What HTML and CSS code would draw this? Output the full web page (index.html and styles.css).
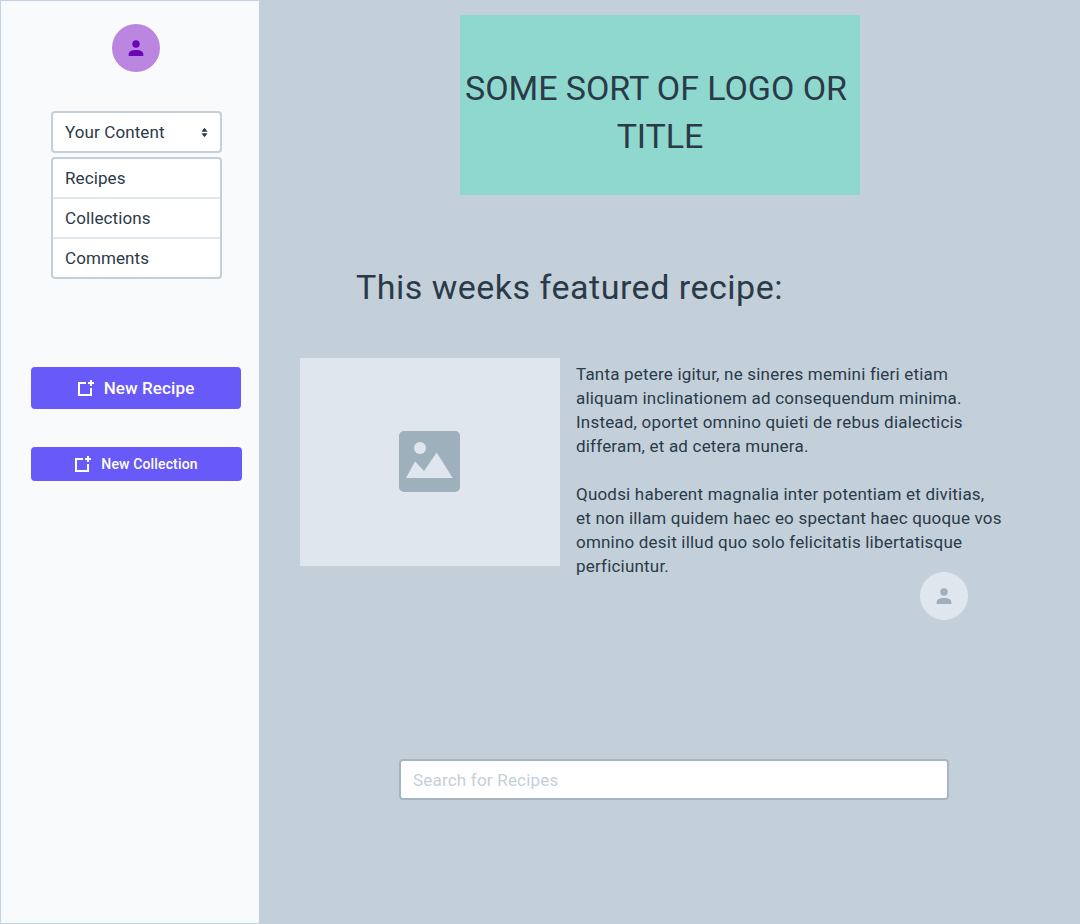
FILE: index.html
```html
<!DOCTYPE html>
<html lang="en">
<head>
    <meta charset="UTF-8">
    <title>Recipes</title>
    <link rel="stylesheet" href="styles.css">
</head>
<body>
<div class="page">
    <aside class="sidebar">
        <div class="avatar avatar-purple">
            <svg viewBox="0 0 16 16" width="16" height="16"><circle cx="8" cy="4" r="3.7"/><path d="M0.700 16v-2.300C0.700 11.500 4 10 8 10s7.300 1.500 7.300 3.700V16z"/></svg>
        </div>
        <div class="select">
            <span>Your Content</span>
            <svg viewBox="0 0 8 12" width="7" height="11"><path d="M4 0.500l3.500 4.700h-7zM4 11.500l-3.500-4.700h7z"/></svg>
        </div>
        <ul class="menu">
            <li>Recipes</li>
            <li>Collections</li>
            <li>Comments</li>
        </ul>
        <a href="#" class="button button-large">
            <svg viewBox="0 0 16 16" width="16" height="16"><path d="M8 2H0v14h14V8h-2v6H2V4h6z"/><path d="M12 0h2v2h2v2h-2v2h-2V4h-2V2h2z"/></svg>
            New Recipe
        </a>
        <a href="#" class="button button-small">
            <svg viewBox="0 0 16 16" width="16" height="16"><path d="M8 2H0v14h14V8h-2v6H2V4h6z"/><path d="M12 0h2v2h2v2h-2v2h-2V4h-2V2h2z"/></svg>
            New Collection
        </a>
    </aside>
    <main class="content">
        <div class="logo"><div class="logo-text">SOME SORT OF LOGO OR TITLE</div></div>
        <h1 class="title">This weeks featured recipe:</h1>
        <section class="feature">
            <div class="picture">
                <svg viewBox="0 0 61 61" width="61" height="61">
                    <rect width="61" height="61" rx="5" fill="#9fb0bd"/>
                    <circle cx="21" cy="17" r="6" fill="#dfe6ee"/>
                    <path d="M7 47l9-16.500 9 9.500 12.700-18.500 16 25.500z" fill="#dfe6ee"/>
                </svg>
            </div>
            <div class="text">
                <p>Tanta petere igitur, ne sineres memini fieri etiam aliquam inclinationem ad consequendum minima. Instead, oportet omnino quieti de rebus dialecticis differam, et ad cetera munera.</p>
                <p>Quodsi haberent magnalia inter potentiam et divitias,<br>et non illam quidem haec eo spectant haec quoque vos omnino desit illud quo solo felicitatis libertatisque perficiuntur.</p>
                <div class="avatar avatar-grey">
                    <svg viewBox="0 0 16 16" width="16" height="16"><circle cx="8" cy="4" r="3.7"/><path d="M0.700 16v-2.300C0.700 11.500 4 10 8 10s7.300 1.500 7.300 3.700V16z"/></svg>
                </div>
            </div>
        </section>
        <input class="search" type="text" placeholder="Search for Recipes">
    </main>
</div>
</body>
</html>
```

FILE: styles.css
```css
* {
    margin: 0;
    padding: 0;
    box-sizing: border-box;
}

body {
    width: 1080px;
    height: 924px;
    overflow: hidden;
    font-family: Roboto, sans-serif;
    font-size: 17px;
    line-height: 24px;
    letter-spacing: .1px;
    color: #2a3a49;
    background-color: #c3d0da;
}

.page {
    display: flex;
    height: 924px;
}

/* sidebar */

.sidebar {
    width: 259px;
    padding-top: 23px;
    background-color: #f8fafc;
    border: solid 1px #c3d3e2;
    border-right: none;
    display: flex;
    flex-direction: column;
}

.avatar {
    width: 48px;
    height: 48px;
    border-radius: 50%;
    display: flex;
    justify-content: center;
    align-items: center;
}

.avatar-purple {
    margin-left: 111px;
    background-color: #bb86e0;
    fill: #6a05b8;
}

.avatar-grey {
    margin: -30px 0 0 344px;
    background-color: #dfe6ee;
    fill: #9fb0bd;
}

.select {
    width: 171px;
    height: 42px;
    margin: 39px 0 0 50px;
    padding: 0 12px;
    background-color: #fff;
    border: solid 2px #c3d0da;
    border-radius: 4px;
    fill: #2a3a49;
    display: flex;
    justify-content: space-between;
    align-items: center;
}

.menu {
    width: 171px;
    margin: 4px 0 0 50px;
    list-style: none;
    background-color: #fff;
    border: solid 2px #c3d0da;
    border-radius: 4px;
}

.menu li {
    height: 40px;
    padding-left: 12px;
    line-height: 39px;
    border-bottom: solid 2px #dfe6ee;
}

.menu li:last-child {
    height: 38px;
    border-bottom: none;
}

.button {
    margin-left: 30px;
    color: #fff;
    font-weight: 500;
    text-decoration: none;
    background-color: #675af8;
    border-radius: 4px;
    fill: #fff;
    display: flex;
    justify-content: center;
    align-items: center;
}

.button-large {
    width: 210px;
    height: 42px;
    margin-top: 88px;
    gap: 10px;
}

.button-small {
    width: 211px;
    height: 34px;
    margin-top: 38px;
    font-size: 14px;
    letter-spacing: .15px;
    gap: 10px;
}

/* main column */

.content {
    flex: 1;
    padding-top: 15px;
    display: flex;
    flex-direction: column;
}

.logo {
    width: 400px;
    height: 180px;
    margin-left: 201px;
    padding-top: 14px;
    font-size: 34px;
    line-height: 48px;
    letter-spacing: -.05px;
    text-align: center;
    background-color: #8fd8ce;
    display: flex;
    align-items: center;
}

.logo-text {
    text-indent: -8px;
}

.title {
    margin: 68px 0 0 97px;
    font-size: 34px;
    line-height: 48px;
    letter-spacing: .5px;
    font-weight: 400;
}

.feature {
    margin: 47px 0 0 41px;
    display: flex;
    gap: 16px;
}

.picture {
    width: 260px;
    height: 208px;
    padding: 0 2px 2px 0;
    background-color: #dfe6ee;
    display: flex;
    justify-content: center;
    align-items: center;
}

.text {
    width: 428px;
    padding-top: 4px;
    letter-spacing: .2px;
}

.text p {
    margin-bottom: 24px;
}

.search {
    width: 550px;
    height: 41px;
    margin: 139px 0 0 140px;
    padding: 0 12px;
    font-family: Roboto, sans-serif;
    font-size: 17px;
    letter-spacing: .2px;
    color: #2a3a49;
    background-color: #fff;
    border: solid 2px #a5b5c2;
    border-radius: 4px;
}

.search::placeholder {
    color: #c3d0da;
}
```
